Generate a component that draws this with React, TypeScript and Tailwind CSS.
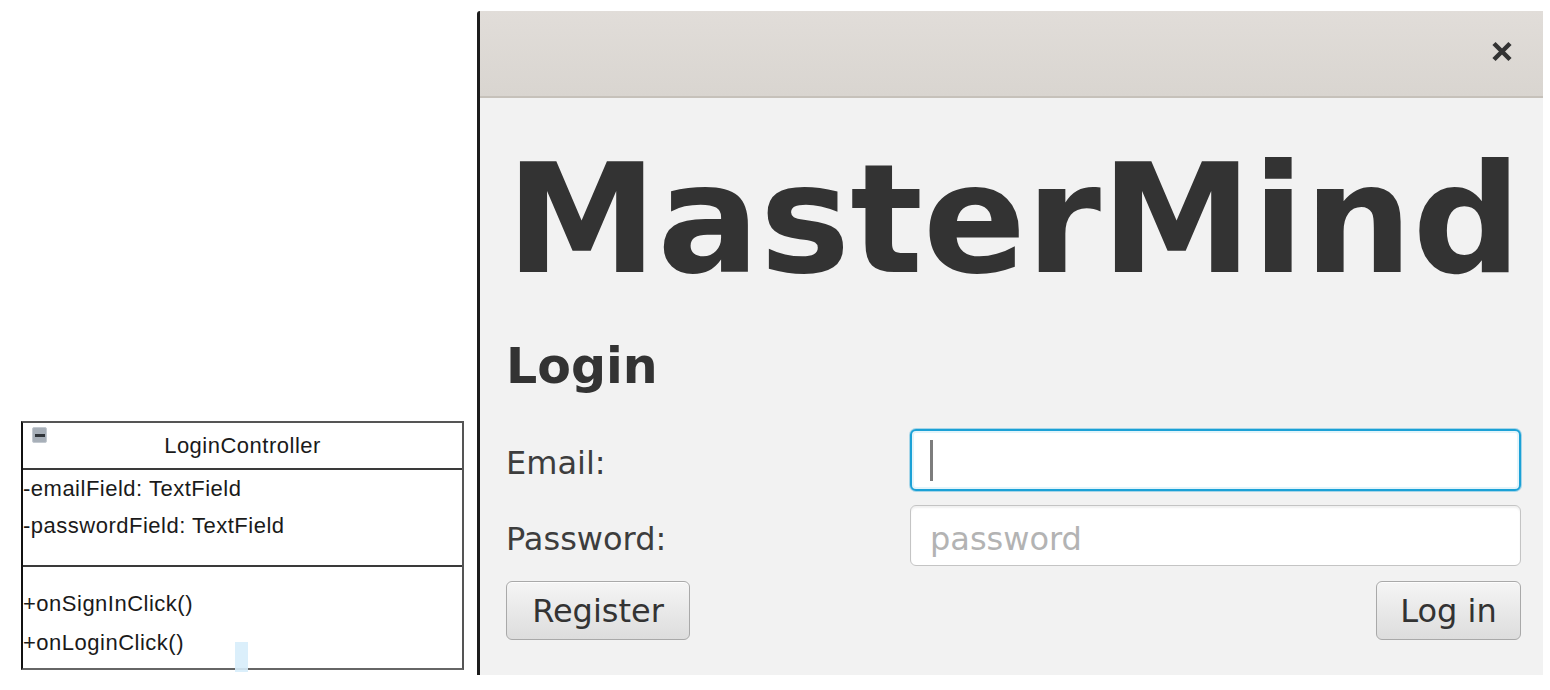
const dejavu = { fontFamily: '"DejaVu Sans", Verdana, sans-serif' }

function ClassBox() {
  return (
    <div
      className="relative flex h-[249px] w-[443px] flex-col border-2 border-l-[#111] border-t-[#555] border-r-[#555] border-b-[#666] bg-white text-[22px] tracking-[0.5px] text-[#1a1a1a]"
      style={{ fontFamily: '"Liberation Sans", Arial, sans-serif' }}
    >
      <div className="relative flex h-[47px] shrink-0 items-center justify-center border-b-2 border-[#3a3a3a]">
        <div className="absolute left-[9px] top-[4px] flex h-[16px] w-[15px] items-center justify-center rounded-[2px] border border-[#c3c9d0] bg-[#a7afb8]">
          <div className="h-[3px] w-[10px] bg-[#30353a]" />
        </div>
        <span>LoginController</span>
      </div>
      <div className="h-[97px] shrink-0 border-b-2 border-[#3a3a3a] leading-[37px]">
        <div>-emailField: TextField</div>
        <div>-passwordField: TextField</div>
      </div>
      <div className="pt-[17px] leading-[39px]">
        <div>+onSignInClick()</div>
        <div>+onLoginClick()</div>
      </div>
      <div className="absolute left-[212px] top-[219px] h-[30px] w-[13px] bg-[#d7edfb] opacity-90" />
    </div>
  )
}

function CloseIcon() {
  return (
    <svg width="22" height="23" viewBox="0 0 22 23">
      <path d="M3 3.5 L19 19.5 M19 3.5 L3 19.5" stroke="#333" strokeWidth="4.5" strokeLinecap="butt" />
    </svg>
  )
}

function LoginWindow() {
  return (
    <div className="mt-[11px] flex h-[664px] w-[1066px] flex-col rounded-tl-[3px] border-l-[3px] border-[#1c1c1c]" style={dejavu}>
      <div className="flex h-[87px] shrink-0 items-center justify-end border-b-2 border-[#c6c1ba] bg-gradient-to-b from-[#e1ddd9] to-[#d9d5d0] pb-[4px] pr-[30px]">
        <CloseIcon />
      </div>
      <div className="flex-1 bg-[#f2f2f2] pl-[26px] pr-[22px] pt-[46px] text-[#333]">
        <h1 className="whitespace-nowrap text-[152px] font-bold leading-[152px]">MasterMind</h1>
        <h2 className="mt-[46px] text-[49px] font-bold leading-[49px]">Login</h2>

        <div className="mt-[38px] grid grid-cols-[404px_1fr] gap-y-[14px] text-[32px] leading-[32px]">
          <label className="flex items-center pt-[6px] text-[#3d3d3d]">Email:</label>
          <div className="flex h-[62px] items-center rounded-[6px] border-2 border-[#1ba1d6] bg-white shadow-[0_0_0_1px_rgba(27,161,214,0.35),inset_0_0_0_2px_rgba(27,161,214,0.12)]">
            <div className="ml-[18px] h-[41px] w-[3px] bg-[#7d7d7d]" />
          </div>

          <label className="flex items-center pt-[6px] text-[#3d3d3d]">Password:</label>
          <div className="flex h-[61px] items-center rounded-[6px] border border-[#c4c4c4] bg-white pl-[19px] pt-[6px] shadow-[inset_0_2px_2px_rgba(0,0,0,0.06)]">
            <span className="text-[#b3b3b3]">password</span>
          </div>
        </div>

        <div className="mt-[15px] flex items-center justify-between text-[32px] leading-[32px]">
          <button
            type="button"
            className="flex h-[59px] w-[184px] items-center justify-center rounded-[6px] border border-[#a9a9a9] bg-gradient-to-b from-[#f5f5f5] to-[#dddddd] text-[#333] shadow-[inset_0_1px_0_rgba(255,255,255,0.8)]"
          >
            Register
          </button>
          <button
            type="button"
            className="flex h-[59px] w-[145px] items-center justify-center rounded-[6px] border border-[#a9a9a9] bg-gradient-to-b from-[#f5f5f5] to-[#dddddd] text-[#333] shadow-[inset_0_1px_0_rgba(255,255,255,0.8)]"
          >
            Log in
          </button>
        </div>
      </div>
    </div>
  )
}

export default function App() {
  return (
    <div className="flex h-[690px] w-[1550px] overflow-hidden bg-white">
      <div className="w-[477px] shrink-0 pl-[21px] pt-[421px]">
        <ClassBox />
      </div>
      <LoginWindow />
    </div>
  )
}
